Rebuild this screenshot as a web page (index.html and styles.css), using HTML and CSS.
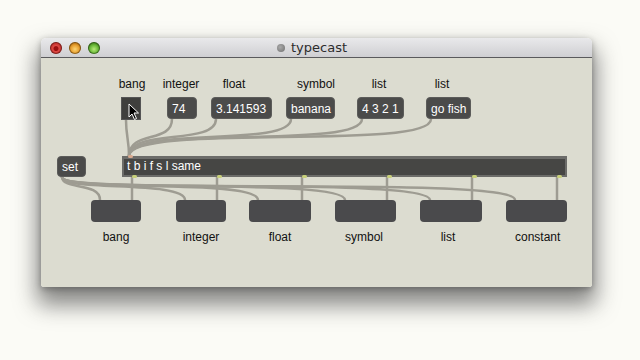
FILE: index.html
```html
<!DOCTYPE html>
<html lang="en">
<head>
  <meta charset="UTF-8" />
  <title>typecast</title>
  <link rel="stylesheet" href="styles.css">
</head>
<body>

  <div class="window">
    <div class="titlebar">
      <div class="lights">
        <span class="light red"></span>
        <span class="light amber"></span>
        <span class="light green"></span>
      </div>
      <div class="title"><span class="doc-icon"></span>typecast</div>
    </div>

    <div class="patcher">
      <!-- patch cords -->
      <svg class="cords" width="551" height="230" viewBox="0 0 551 230">
        <g fill="none" stroke="#9e9c92" stroke-width="2.5" stroke-linecap="round">
          <path d="M85 62 C85 78 88 82 88 98" />
          <path d="M131 61 C131 86 88 72 88 98" />
          <path d="M175 61 C175 88 88 70 88 98" />
          <path d="M250 61 C250 90 88 68 88 98" />
          <path d="M321 61 C321 92 88 66 88 98" />
          <path d="M390 61 C390 94 88 64 88 98" />

          <path d="M21 119 C21 132 59 124 59 142" />
          <path d="M21 119 C21 134 144 122 144 142" />
          <path d="M21 119 C21 135 217 120 217 142" />
          <path d="M21 119 C21 136 304 119 304 142" />
          <path d="M21 119 C21 137 389 118 389 142" />
          <path d="M21 119 C21 138 474 117 474 142" />

          <path d="M91 119 L91 142" />
          <path d="M176 119 L176 142" />
          <path d="M261 119 L261 142" />
          <path d="M346 119 L346 142" />
          <path d="M431 119 L431 142" />
          <path d="M516 119 L516 142" />
        </g>
      </svg>

      <!-- labels above -->
      <span class="label top" style="left: 71px;">bang</span>
      <span class="label top" style="left: 120px;">integer</span>
      <span class="label top" style="left: 173px;">float</span>
      <span class="label top" style="left: 255px;">symbol</span>
      <span class="label top" style="left: 318px;">list</span>
      <span class="label top" style="left: 381px;">list</span>

      <!-- inputs -->
      <div class="bang" style="left: 80px; top: 39px;">
        <svg class="cursor" width="12" height="18" viewBox="0 0 12 18">
          <path d="M1 1 L1 14 L4 11 L6.5 16.5 L8.5 15.5 L6 10 L10.5 10 Z" fill="#000" stroke="#fff" stroke-width="1" />
        </svg>
      </div>
      <div class="box msg" style="left: 126px; width: 30px;">74</div>
      <div class="box msg" style="left: 170px; width: 61px;">3.141593</div>
      <div class="box msg" style="left: 245px; width: 49px;">banana</div>
      <div class="box msg" style="left: 316px; width: 47px;">4 3 2 1</div>
      <div class="box msg" style="left: 385px; width: 45px;">go fish</div>

      <div class="box set">set</div>

      <div class="trigger">
        t b i f s l same
        <span class="inlet"></span>
        <span class="outlet" style="left: 8px;"></span>
        <span class="outlet" style="left: 93px;"></span>
        <span class="outlet" style="left: 178px;"></span>
        <span class="outlet" style="left: 263px;"></span>
        <span class="outlet" style="left: 348px;"></span>
        <span class="outlet" style="left: 433px;"></span>
      </div>

      <!-- outputs -->
      <div class="box out" style="left: 50px; width: 50px;"></div>
      <div class="box out" style="left: 135px; width: 50px;"></div>
      <div class="box out" style="left: 208px; width: 62px;"></div>
      <div class="box out" style="left: 294px; width: 61px;"></div>
      <div class="box out" style="left: 379px; width: 62px;"></div>
      <div class="box out" style="left: 465px; width: 61px;"></div>

      <span class="label bottom" style="left: 55px;">bang</span>
      <span class="label bottom" style="left: 140px;">integer</span>
      <span class="label bottom" style="left: 219px;">float</span>
      <span class="label bottom" style="left: 303px;">symbol</span>
      <span class="label bottom" style="left: 387px;">list</span>
      <span class="label bottom" style="left: 474px;">constant</span>
    </div>
  </div>

</body>
</html>
```

FILE: styles.css
```css
body {
  margin: 0;
  padding: 38px 0 0 41px;
  min-height: 360px;
  box-sizing: border-box;
  background-color: #fbfbf6;
  font-family: "Liberation Sans", Arial, sans-serif;
}

.window {
  width: 551px;
  border-radius: 5px 5px 3px 3px;
  box-shadow: 0 14px 22px 4px rgba(40, 40, 40, 0.55), 0 2px 6px rgba(0, 0, 0, 0.3);
}

.titlebar {
  height: 19px;
  display: flex;
  align-items: center;
  border-radius: 5px 5px 0 0;
  background: linear-gradient(#e9e9eb, #cfcfd2);
  border-bottom: 1px solid #5a5a5c;
}

.lights {
  display: flex;
  gap: 7px;
  padding-left: 9px;
}

.light {
  width: 12px;
  height: 12px;
  border-radius: 50%;
  box-shadow: inset 0 0 0 1px rgba(0, 0, 0, 0.35);
}

.red {
  background: radial-gradient(circle at 50% 55%, #9a0f10 0 2px, #e04a45 3px, #b82a26 6px);
}

.amber {
  background: radial-gradient(circle at 50% 60%, #fbd575 0, #e8a030 4px, #c07a18 6px);
}

.green {
  background: radial-gradient(circle at 50% 60%, #b8ea7a 0, #6cbb3a 4px, #4a8d22 6px);
}

.title {
  flex: 1;
  display: flex;
  justify-content: center;
  align-items: center;
  gap: 6px;
  margin-right: 68px;
  font-family: "DejaVu Sans", sans-serif;
  font-size: 13px;
  color: #2c2c2c;
}

.doc-icon {
  width: 8px;
  height: 8px;
  border-radius: 50%;
  background: radial-gradient(circle at 40% 40%, #aaa, #6f6f6f);
}

.patcher {
  position: relative;
  height: 229px;
  border-radius: 0 0 3px 3px;
  background-color: #dcdcd0;
}

.cords {
  position: absolute;
  left: 0;
  top: 0;
}

.label {
  position: absolute;
  width: 40px;
  text-align: center;
  font-size: 12px;
  color: #111;
  white-space: nowrap;
}

.label.top {
  top: 19px;
}

.label.bottom {
  top: 172px;
}

.box {
  position: absolute;
  box-sizing: border-box;
  border-radius: 4px;
  background-color: #4b4b4a;
  color: #fff;
  font-size: 12px;
  line-height: 22px;
  padding-left: 4px;
  white-space: nowrap;
}

.msg {
  top: 39px;
  height: 22px;
  border: 1px solid #5c5c5a;
}

.set {
  left: 16px;
  top: 98px;
  width: 29px;
  height: 21px;
  line-height: 20px;
  border: 1px solid #5c5c5a;
}

.out {
  top: 142px;
  height: 22px;
  background-color: #4a4a4c;
}

.bang {
  position: absolute;
  box-sizing: border-box;
  width: 20px;
  height: 23px;
  background-color: #3f3f3d;
  border: 1px solid #555;
}

.cursor {
  position: absolute;
  left: 6px;
  top: 5px;
}

.trigger {
  position: absolute;
  left: 81px;
  top: 98px;
  width: 445px;
  height: 21px;
  box-sizing: border-box;
  background-color: #464644;
  border: 2px solid #6c6c69;
  border-top-width: 3px;
  color: #fff;
  font-size: 12px;
  line-height: 15px;
  padding-left: 3px;
  white-space: nowrap;
}

.inlet {
  position: absolute;
  left: 4px;
  top: -4px;
  width: 5px;
  height: 3px;
  border-radius: 2px;
  background-color: #d9a98e;
}

.outlet {
  position: absolute;
  bottom: -3px;
  width: 5px;
  height: 3px;
  border-radius: 2px;
  background-color: #c8d07a;
}
```
